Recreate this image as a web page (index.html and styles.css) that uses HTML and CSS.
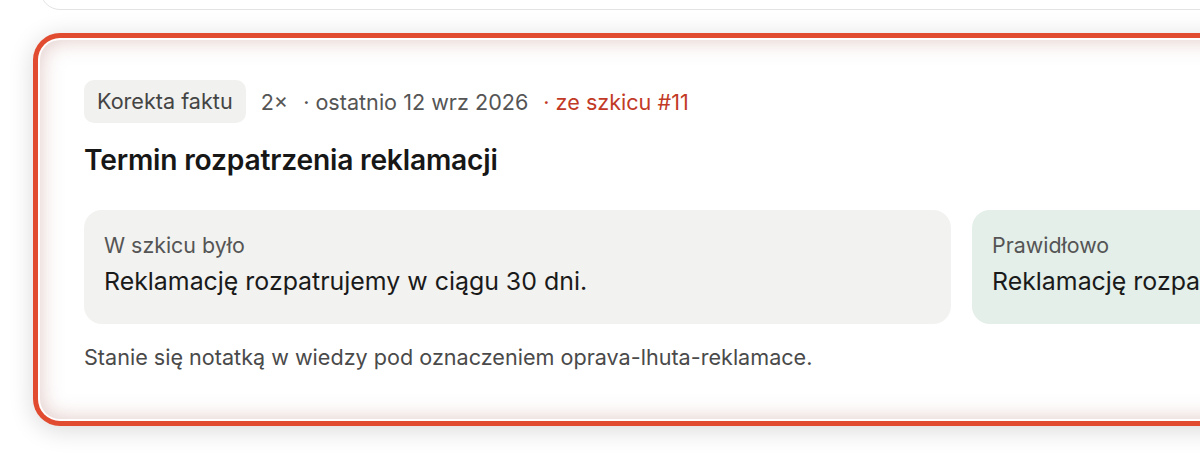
FILE: index.html
```html
<!DOCTYPE html>
<html lang="pl">
<head>
  <meta charset="UTF-8" />
  <title>Korekty faktów</title>
  <meta name="viewport" content="width=device-width, initial-scale=1.0">
  <link rel="stylesheet" href="styles.css">
</head>
<body>
  <div class="list">
    <!-- previous item, mostly scrolled away -->
    <div class="card card-prev"></div>

    <!-- highlighted item -->
    <div class="card card-active">
      <div class="meta">
        <span class="chip">Korekta faktu</span>
        <span class="count">2×</span>
        <span>· ostatnio 12 wrz 2026</span>
        <span class="source">· ze szkicu #11</span>
      </div>

      <h3 class="title">Termin rozpatrzenia reklamacji</h3>

      <div class="compare">
        <div class="box box-was">
          <div class="box-label">W szkicu było</div>
          <div class="box-text">Reklamację rozpatrujemy w ciągu 30 dni.</div>
        </div>
        <div class="box box-right">
          <div class="box-label">Prawidłowo</div>
          <div class="box-text">Reklamację rozpatrujemy w ciągu 14 dni.</div>
        </div>
      </div>

      <p class="note">Stanie się notatką w wiedzy pod oznaczeniem oprava-lhuta-reklamace.</p>
    </div>
  </div>
</body>
</html>
```

FILE: styles.css
```css
html, body {
  margin: 0;
  height: 100%;
  overflow: hidden;
}
body {
  background: #fff;
  color: #1b1b1b;
  font-family: "Inter", "Noto Sans", sans-serif;
}
.list {
  padding-left: 40px;
  display: flex;
  flex-direction: column;
  gap: 30px;
}
.card {
  width: 1843px;
  box-sizing: border-box;
  background: #fff;
  border-radius: 20px;
}
.card-prev {
  height: 70px;
  margin-top: -60px;
  border: 1.5px solid #e3e3e3;
}
.card-active {
  padding: 40px 44px 48px;
  box-shadow:
    inset 0 0 22px rgba(165, 95, 85, 0.34),
    0 0 0 2px #fff,
    0 0 0 7px #e14b2f,
    0 4px 24px 8px rgba(0, 0, 0, 0.14);
}
.meta {
  display: flex;
  align-items: center;
  gap: 15px;
  font-size: 21.6px;
  color: #555;
}
.chip {
  background: #f1f1ef;
  color: #444;
  padding: 8px 13px;
  line-height: 27px;
  border-radius: 10px;
}
.source {
  color: #c23a26;
}
.title {
  margin: 19px 0 0;
  font-size: 28.2px;
  line-height: 36px;
  font-weight: 600;
  color: #171717;
  letter-spacing: -0.2px;
}
.compare {
  display: grid;
  grid-template-columns: 1fr 1fr;
  gap: 21px;
  margin-top: 32px;
}
.box {
  border-radius: 18px;
  padding: 21px 20px 26px;
}
.box-was {
  background: #f2f2f0;
}
.box-right {
  background: #e3efe8;
}
.box-label {
  font-size: 21.4px;
  line-height: 28px;
  color: #555;
}
.box-text {
  margin-top: 5px;
  font-size: 24.9px;
  line-height: 34px;
  color: #1a1a1a;
}
.note {
  margin: 19px 0 0;
  font-size: 21.6px;
  line-height: 28px;
  color: #4a4a4a;
}
```
